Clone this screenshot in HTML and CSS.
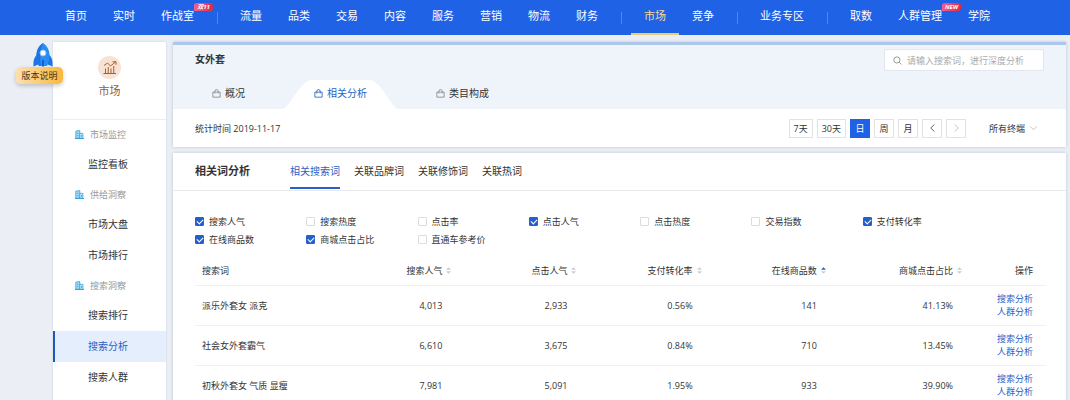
FILE: index.html
```html
<!DOCTYPE html>
<html lang="zh-CN">
<head>
    <meta charset="UTF-8">
    <meta name="viewport" content="width=device-width, initial-scale=1.0">
    <title>市场 - 搜索分析</title>
    <link rel="stylesheet" href="styles.css">
</head>
<body>

    <!-- Shared icons -->
    <svg class="sprite" aria-hidden="true">
        <symbol id="bag" viewBox="0 0 16 16">
            <path d="M1.5 5.5h13v9h-13z M5 8V4a3 3 0 0 1 6 0v4" fill="none" stroke="currentColor" stroke-width="1.5"/>
        </symbol>
        <symbol id="building" viewBox="0 0 16 16">
            <path d="M1.5 14.5V2l7-1v13.5z" fill="#a9dcf6" stroke="#35a3e0" stroke-width="1.5"/>
            <path d="M8.5 6h5.5v8.5H8.5z" fill="#d9f0fb" stroke="#35a3e0" stroke-width="1.5"/>
            <path d="M0 15h16M5 5v2M5 9v2M11.5 9v3" stroke="#35a3e0" stroke-width="1.8"/>
        </symbol>
        <symbol id="sort" viewBox="0 0 6 8">
            <path d="M0 3L3 0l3 3z"/>
            <path d="M0 5l3 3 3-3z"/>
        </symbol>
        <symbol id="sort-asc" viewBox="0 0 6 8">
            <path d="M0 3L3 0l3 3z" fill="#2460cc"/>
            <path d="M0 5l3 3 3-3z"/>
        </symbol>
    </svg>

    <header class="topbar">
        <nav class="topnav">
            <a href="#">首页</a>
            <a href="#">实时</a>
            <a href="#">作战室<span class="tag">双11</span></a>
            <span class="sep"></span>
            <a href="#">流量</a>
            <a href="#">品类</a>
            <a href="#">交易</a>
            <a href="#">内容</a>
            <a href="#">服务</a>
            <a href="#">营销</a>
            <a href="#">物流</a>
            <a href="#">财务</a>
            <span class="sep"></span>
            <a href="#" class="active">市场</a>
            <a href="#">竞争</a>
            <span class="sep"></span>
            <a href="#">业务专区</a>
            <span class="sep"></span>
            <a href="#">取数</a>
            <a href="#">人群管理<span class="tag">NEW</span></a>
            <a href="#">学院</a>
        </nav>
    </header>

    <a href="#" class="version">
        <svg class="rocket" viewBox="0 0 40 48" aria-hidden="true">
            <path d="M10 22C3 27 0 34 1 47l12-5zM30 22c7 5 10 12 9 25l-12-5z" fill="#1d74e6"/>
            <path d="M20 0c-9 6-13 15-13 25 0 7 2 14 5 21h16c3-7 5-14 5-21C33 15 29 6 20 0z" fill="#2a8df3"/>
            <path d="M20 0c-9 6-13 15-13 25 0 7 2 14 5 21h4c-3-16-2-32 4-46z" fill="#1c74e4"/>
            <path d="M18 34h4v13h-4z" fill="#175fd0"/>
            <circle cx="20" cy="20" r="6" fill="#fff" stroke="#8cc4fb" stroke-width="2"/>
        </svg>
        <span class="version-label">版本说明</span>
    </a>

    <div class="layout">
        <aside class="sidebar">
            <div class="profile">
                <svg class="profile-icon" viewBox="0 0 46 46" aria-hidden="true">
                    <circle cx="23" cy="23" r="23" fill="#f8e2d3"/>
                    <path d="M11 35h25M15 34v-9M20.5 34v-12M26 34v-9M31.5 34V20M12 19l7-5 6 6 10-8M29 11.5h7v6" fill="none" stroke="#a5602d" stroke-width="2"/>
                </svg>
                <span>市场</span>
            </div>
            <h3><svg aria-hidden="true"><use href="#building"/></svg>市场监控</h3>
            <a href="#">监控看板</a>
            <h3><svg aria-hidden="true"><use href="#building"/></svg>供给洞察</h3>
            <a href="#">市场大盘</a>
            <a href="#">市场排行</a>
            <h3><svg aria-hidden="true"><use href="#building"/></svg>搜索洞察</h3>
            <a href="#">搜索排行</a>
            <a href="#" class="active">搜索分析</a>
            <a href="#">搜索人群</a>
        </aside>

        <main class="content">
            <section class="card keyword">
                <div class="keyword-head">
                    <div class="keyword-title">
                        <h1>女外套</h1>
                        <label class="search">
                            <svg viewBox="0 0 16 16" aria-hidden="true"><path d="M11 11l4 4M12.5 7a5.5 5.5 0 1 1-11 0 5.5 5.5 0 0 1 11 0z" fill="none" stroke="#888" stroke-width="1.5"/></svg>
                            <input type="text" placeholder="请输入搜索词，进行深度分析" aria-label="搜索词">
                        </label>
                    </div>
                    <nav class="page-tabs">
                        <a href="#"><svg class="bag" aria-hidden="true"><use href="#bag"/></svg>概况</a>
                        <a href="#" class="active">
                            <svg class="tab-shape" viewBox="0 0 115 29" preserveAspectRatio="none" aria-hidden="true"><path d="M0 29C8 26 17 0 29 0h57c12 0 21 26 29 29z" fill="#fff"/></svg>
                            <svg class="bag" aria-hidden="true"><use href="#bag"/></svg>相关分析
                        </a>
                        <a href="#"><svg class="bag" aria-hidden="true"><use href="#bag"/></svg>类目构成</a>
                    </nav>
                </div>
                <div class="period">
                    <span class="period-date">统计时间 2019-11-17</span>
                    <div class="period-buttons">
                        <button type="button">7天</button>
                        <button type="button">30天</button>
                        <button type="button" class="active">日</button>
                        <button type="button">周</button>
                        <button type="button">月</button>
                        <button type="button" aria-label="前一天"><svg viewBox="0 0 8 8"><path d="M6 0L2 4l4 4"/></svg></button>
                        <button type="button" aria-label="后一天" disabled><svg viewBox="0 0 8 8"><path d="M2 0l4 4-4 4"/></svg></button>
                    </div>
                    <div class="terminal">
                        <select aria-label="终端">
                            <option>所有终端</option>
                        </select>
                        <svg viewBox="0 0 8 8" aria-hidden="true"><path d="M0 2l4 4 4-4"/></svg>
                    </div>
                </div>
            </section>

            <section class="card">
                <div class="card-head">
                    <h2>相关词分析</h2>
                    <nav class="word-tabs">
                        <a href="#" class="active">相关搜索词</a>
                        <a href="#">关联品牌词</a>
                        <a href="#">关联修饰词</a>
                        <a href="#">关联热词</a>
                    </nav>
                </div>

                <div class="card-body">
                    <div class="metrics">
                        <label><input type="checkbox" checked>搜索人气</label>
                        <label><input type="checkbox">搜索热度</label>
                        <label><input type="checkbox">点击率</label>
                        <label><input type="checkbox" checked>点击人气</label>
                        <label><input type="checkbox">点击热度</label>
                        <label><input type="checkbox">交易指数</label>
                        <label><input type="checkbox" checked>支付转化率</label>
                        <label><input type="checkbox" checked>在线商品数</label>
                        <label><input type="checkbox" checked>商城点击占比</label>
                        <label><input type="checkbox">直通车参考价</label>
                    </div>

                    <table>
                        <thead>
                            <tr>
                                <th class="word">搜索词</th>
                                <th class="c1">搜索人气<svg class="sort"><use href="#sort"/></svg></th>
                                <th class="c2">点击人气<svg class="sort"><use href="#sort"/></svg></th>
                                <th class="c3">支付转化率<svg class="sort"><use href="#sort"/></svg></th>
                                <th class="c4">在线商品数<svg class="sort"><use href="#sort-asc"/></svg></th>
                                <th class="c5">商城点击占比<svg class="sort"><use href="#sort"/></svg></th>
                                <th class="ops">操作</th>
                            </tr>
                        </thead>
                        <tbody>
                            <tr>
                                <td class="word">派乐外套女 派克</td>
                                <td>4,013</td>
                                <td>2,933</td>
                                <td>0.56%</td>
                                <td>141</td>
                                <td>41.13%</td>
                                <td class="ops"><a href="#">搜索分析</a><a href="#">人群分析</a></td>
                            </tr>
                            <tr>
                                <td class="word">社会女外套霸气</td>
                                <td>6,610</td>
                                <td>3,675</td>
                                <td>0.84%</td>
                                <td>710</td>
                                <td>13.45%</td>
                                <td class="ops"><a href="#">搜索分析</a><a href="#">人群分析</a></td>
                            </tr>
                            <tr>
                                <td class="word">初秋外套女 气质 显瘦</td>
                                <td>7,981</td>
                                <td>5,091</td>
                                <td>1.95%</td>
                                <td>933</td>
                                <td>39.90%</td>
                                <td class="ops"><a href="#">搜索分析</a><a href="#">人群分析</a></td>
                            </tr>
                        </tbody>
                    </table>
                </div>
            </section>
        </main>
    </div>

</body>
</html>
```
FILE: styles.css
```css
* {
    box-sizing: border-box;
}

body {
    margin: 0;
    background: #ebeff5;
    color: #333;
    font-family: "Open Sans", "Noto Sans CJK SC", sans-serif;
    font-size: 9px;
    line-height: 13px;
}

a {
    color: inherit;
    text-decoration: none;
}

h1, h2, h3 {
    margin: 0;
}

input, button, select {
    font: inherit;
    color: inherit;
}

.sprite {
    position: absolute;
    width: 0;
    height: 0;
}

/* Top navigation */
.topbar {
    background: #2062e6;
    color: #fff;
}

.topnav {
    display: flex;
    align-items: center;
    height: 35px;
    padding-left: 52px;
    font-size: 11px;
    white-space: nowrap;
}

.topnav a {
    position: relative;
    height: 35px;
    padding: 0 13px;
    line-height: 32px;
}

.topnav .active {
    color: #f3d9a0;
    border-bottom: 2px solid #e8cf7a;
}

.sep {
    width: 1px;
    height: 12px;
    margin: 0 9px 0 10px;
    background: #4f86f0;
}

.tag {
    position: absolute;
    top: 3px;
    right: -6px;
    width: 19px;
    height: 8px;
    border-radius: 3px 3px 3px 0;
    background: linear-gradient(90deg, #f0609a, #e02840);
    font-size: 6px;
    font-weight: bold;
    font-style: italic;
    line-height: 8px;
    text-align: center;
}

/* Floating version note */
.version {
    position: absolute;
    top: 43px;
    left: 16px;
    width: 47px;
    color: #5a3210;
}

.rocket {
    display: block;
    width: 20px;
    height: 24px;
    margin-left: 17px;
}

.version-label {
    display: block;
    border-radius: 5px;
    background: linear-gradient(90deg, #fbe0b0, #f8b83c);
    box-shadow: 0 2px 4px rgba(0, 0, 0, 0.2);
    line-height: 17px;
    text-align: center;
}

.layout {
    display: flex;
    gap: 7px;
    min-height: calc(100vh - 35px);
    padding: 7px 4px 0 53px;
}

/* Sidebar */
.sidebar {
    flex: none;
    width: 113px;
    background: #fff;
    box-shadow: 0 0 2px rgba(60, 80, 120, 0.2);
}

.profile {
    display: flex;
    flex-direction: column;
    align-items: center;
    gap: 4px;
    height: 78px;
    padding-top: 14px;
    border-bottom: 1px solid #eee;
    color: #96602f;
    font-size: 11px;
    line-height: 16px;
}

.profile-icon {
    width: 23px;
    height: 23px;
}

.sidebar h3 {
    display: flex;
    align-items: center;
    gap: 6px;
    height: 29px;
    padding-left: 22px;
    color: #999;
    font-size: 9px;
    font-weight: normal;
}

.sidebar h3 svg {
    width: 9px;
    height: 9px;
}

.sidebar a {
    display: block;
    padding-left: 35px;
    font-size: 10px;
    line-height: 31px;
}

.sidebar .active {
    padding-left: 33px;
    border-left: 2px solid #1d57b8;
    background: #e4eefc;
    color: #2a5fc4;
}

/* Cards */
.content {
    flex: 1;
    min-width: 0;
    display: flex;
    flex-direction: column;
    gap: 6px;
}

.card {
    background: #fff;
    box-shadow: 0 0 3px rgba(60, 80, 120, 0.25);
}

.card:last-child {
    flex: 1;
}

.keyword {
    border-top: 3px solid #adc6ec;
}

.keyword-head {
    background: #eff4fb;
}

.keyword-title {
    display: flex;
    justify-content: space-between;
    padding: 4px 22px 9px;
}

.keyword-title h1 {
    font-size: 10px;
    line-height: 20px;
}

.search {
    display: flex;
    align-items: center;
    gap: 5px;
    width: 160px;
    height: 22px;
    padding: 0 8px;
    border: 1px solid #e3e7ee;
    background: #fff;
}

.search svg {
    flex: none;
    width: 9px;
    height: 9px;
}

.search input {
    flex: 1;
    min-width: 0;
    padding: 0;
    border: 0;
    outline: none;
    background: none;
}

.search input::placeholder {
    color: #aaa;
}

.page-tabs {
    display: flex;
    gap: 7px;
    height: 29px;
    padding-left: 8px;
    font-size: 10px;
}

.page-tabs a {
    position: relative;
    display: flex;
    align-items: center;
    gap: 4px;
    padding: 0 31px 3px;
    isolation: isolate;
}

.page-tabs .active {
    color: #2a5fc4;
}

.tab-shape {
    position: absolute;
    z-index: -1;
    top: 0;
    left: 0;
    width: 100%;
    height: 100%;
}

.bag {
    width: 9px;
    height: 9px;
    color: #888;
}

.active .bag {
    color: #2a5fc4;
}

/* Date and terminal controls */
.period {
    display: flex;
    align-items: center;
    height: 38px;
    padding: 0 29px 0 22px;
}

.period-date {
    flex: 1;
}

.period-buttons {
    display: flex;
    gap: 4px;
}

.period-buttons button {
    display: flex;
    align-items: center;
    justify-content: center;
    min-width: 20px;
    height: 19px;
    padding: 0 4px;
    border: 1px solid #e2e2e2;
    background: #fff;
}

.period-buttons .active {
    border-color: #2062e6;
    background: #2062e6;
    color: #fff;
}

.period svg {
    flex: none;
    width: 7px;
    height: 8px;
    fill: none;
    stroke: #444;
    stroke-width: 1;
}

.period button:disabled svg,
.terminal svg {
    stroke: #bbb;
}

.terminal {
    display: flex;
    align-items: center;
    margin-left: 23px;
}

.terminal select {
    width: 48px;
    margin-right: -7px;
    padding: 0;
    border: 0;
    appearance: none;
    background: none;
}

.terminal svg {
    pointer-events: none;
}

/* Related words */
.card-head {
    display: flex;
    gap: 40px;
    height: 38px;
    padding-left: 22px;
    border-bottom: 1px solid #e8eaee;
}

.card-head h2 {
    font-size: 11px;
    font-weight: 600;
    line-height: 36px;
}

.word-tabs {
    display: flex;
    gap: 14px;
    height: 36px;
    font-size: 10px;
    line-height: 37px;
}

.word-tabs .active {
    border-bottom: 2px solid #2a5fc4;
    color: #2a5fc4;
}

.card-body {
    padding: 21px 20px 0 22px;
}

.metrics {
    display: grid;
    grid-template-columns: repeat(7, 1fr);
    margin-right: 72px;
}

.metrics label {
    display: flex;
    align-items: center;
    gap: 5px;
    height: 18px;
}

.metrics input {
    position: relative;
    width: 9px;
    height: 9px;
    margin: 0;
    border: 1px solid #ddd;
    border-radius: 1px;
    appearance: none;
    background: #fff;
}

.metrics input:checked {
    border-color: #2460cc;
    background: #2460cc;
}

.metrics input:checked::after {
    content: "";
    position: absolute;
    top: 0;
    left: 2px;
    width: 3px;
    height: 5px;
    border: solid #fff;
    border-width: 0 1px 1px 0;
    transform: rotate(45deg);
}

table {
    width: 100%;
    margin-top: 9px;
    border-collapse: collapse;
    table-layout: fixed;
}

th, td {
    height: 40px;
    padding: 0 19px 0 0;
    border-bottom: 1px solid #f0f0f0;
    text-align: right;
}

th {
    height: 28px;
    padding-right: 10px;
    font-weight: normal;
    white-space: nowrap;
}

.word {
    padding-left: 7px;
    text-align: left;
}

.c1, .c2, .c3 {
    width: 14.7%;
}

.c4 {
    width: 14.6%;
}

.c5 {
    width: 16%;
}

th.ops {
    width: 8.7%;
}

.ops {
    padding-right: 13px;
}

.ops a {
    display: block;
    color: #2a5fc4;
}

.sort {
    width: 5px;
    height: 7px;
    margin-left: 4px;
    fill: #ccc;
}
```
